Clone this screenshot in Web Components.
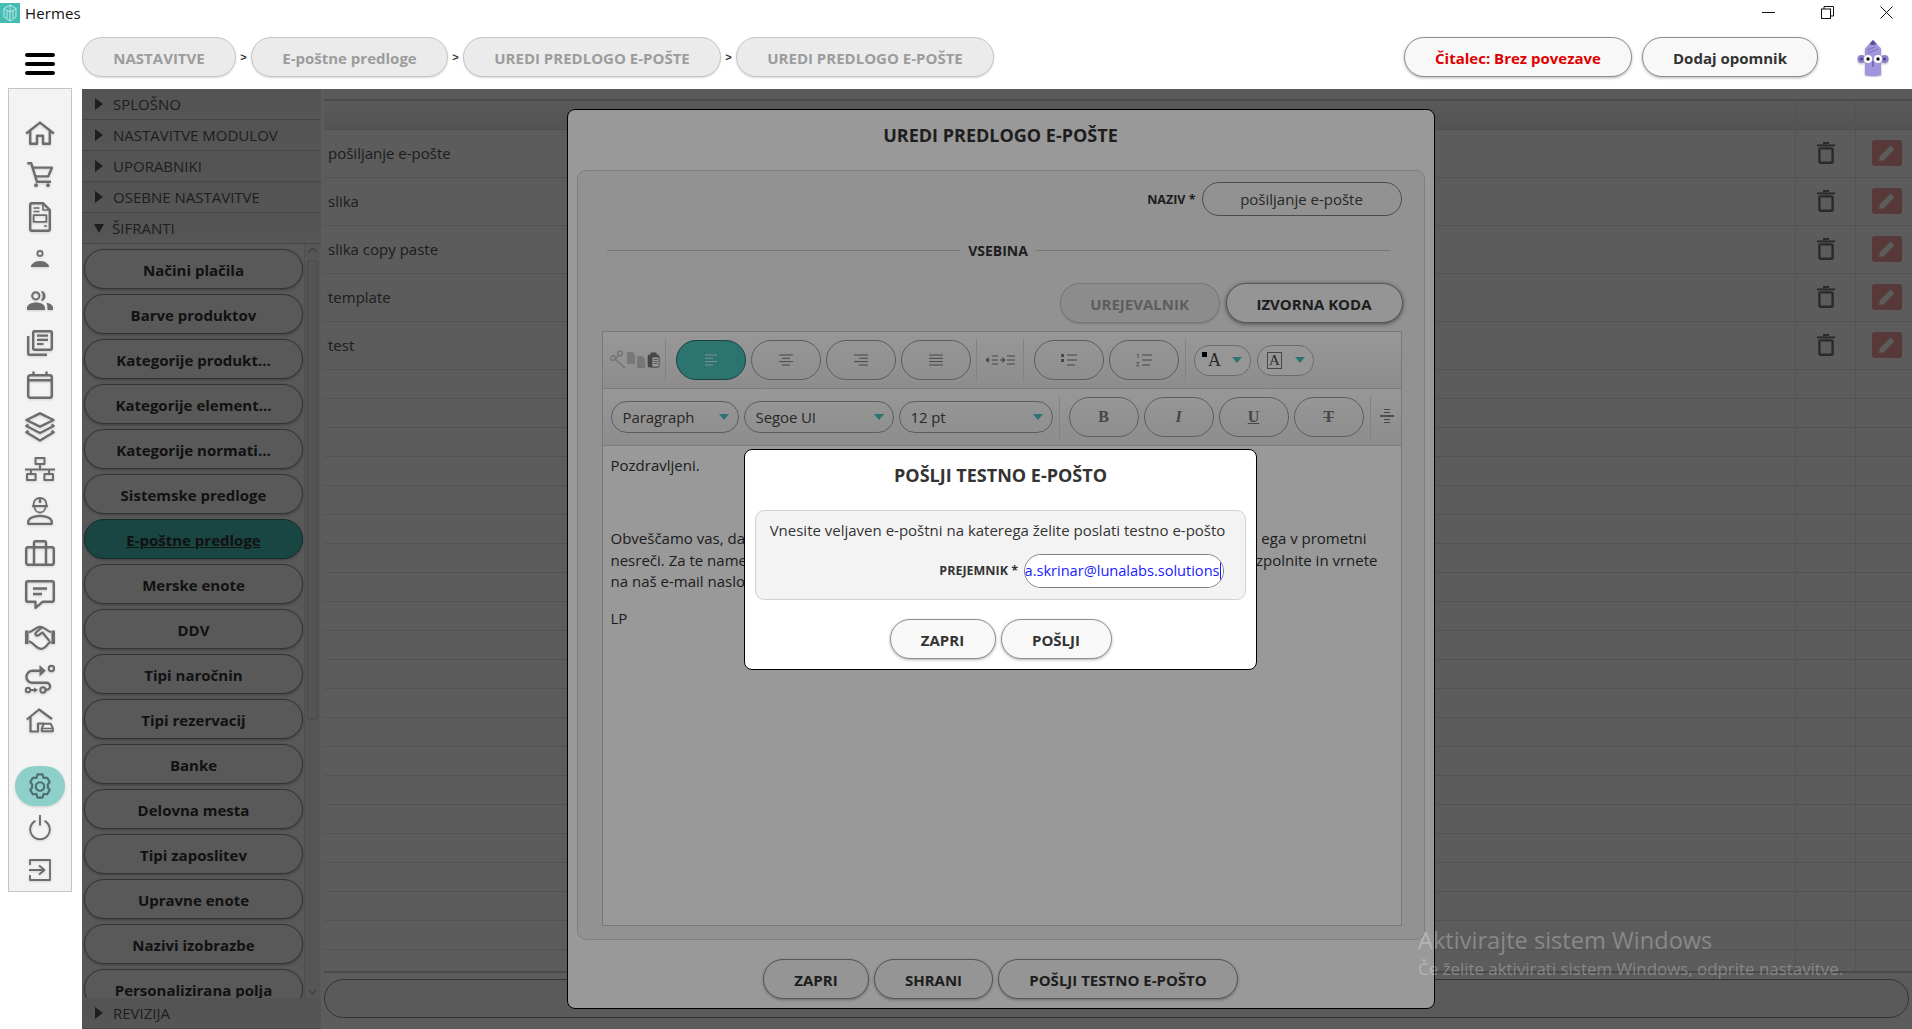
<!DOCTYPE html>
<html lang="sl">
<head>
<meta charset="utf-8">
<title>Hermes</title>
<style>
html,body{margin:0;padding:0;height:100%;overflow:hidden;background:#fff;font-family:"Open Sans","Liberation Sans",sans-serif;color:#333}
</style>
</head>
<body>
<hermes-app></hermes-app>
<script>
const ICONS = {
home:[30,24,'<path d="M1.2 12.5 15 1.6l13.8 10.9" fill="none"/><path d="M5.2 9.8V22.8H12V14.8h6V22.8h6.8V9.8" fill="none"/>'],
cart:[26,25,'<path d="M.3 1.2H4.2L10 19.8H24" fill="none"/><path d="M5.4 5.6H25l-3.8 8.8H8.2" fill="none"/><circle cx="9" cy="23.2" r="1.9" fill="currentColor" stroke="none"/><circle cx="21" cy="23.2" r="1.9" fill="currentColor" stroke="none"/>'],
doc:[22,30,'<path d="M1.2 2.4a1.2 1.2 0 0 1 1.2-1.2H14L20.8 8V27.6a1.2 1.2 0 0 1-1.2 1.2H2.4a1.2 1.2 0 0 1-1.2-1.2Z" fill="none"/><path d="M14 1.2V8H20.8M4.5 6h6M4.5 9.5h6M15 24h3" fill="none" stroke-width="1.6"/><rect x="4.6" y="13.2" width="12.8" height="6.6" fill="none" stroke-width="1.8"/>'],
person:[18,17,'<circle cx="9" cy="3.4" r="2.6" fill="none" stroke-width="1.7"/><path d="M0 17c0-1 .1-1.8.8-2.6C2.6 12 5.8 10.9 9 10.9s6.4 1.1 8.2 3.5c.7.8.8 1.6.8 2.6Z" fill="currentColor" stroke="none"/>'],
group:[26,19,'<circle cx="8.8" cy="4.8" r="3.6" fill="none" stroke-width="2"/><path d="M14.8 .6a4.6 4.6 0 0 1 0 8.6c2-1 2-7.6 0-8.6Z" fill="currentColor" stroke-width="1.4"/><path d="M0 19v-2c0-3.4 4.2-5.5 9-5.500s9 2.100 9 5.500v2Z" fill="currentColor" stroke="none"/><path d="M19.500 11.800c3.800.6 6.500 2.400 6.500 5v2.200h-5.500v-2.500c0-1.800-.3-3.300-1-4.700Z" fill="currentColor" stroke="none"/>'],
docs:[26,26,'<rect x="6.2" y="1.2" width="18.6" height="18.6" rx="1.5" fill="none"/><path d="M1.2 6V23.3a1.5 1.5 0 0 0 1.5 1.5H20" fill="none"/><path d="M10 5.6h11M10 9.8h11M10 14h6.500" fill="none" stroke-width="2.2"/>'],
calendar:[26,28,'<rect x="1.2" y="4.2" width="23.6" height="22.6" rx="2" fill="none"/><path d="M1.2 9.3H24.8M6.5 .5V4.5M19.5 .5V4.5" fill="none"/>'],
layers:[30,30,'<path d="M15 1.4 28.600 8 15 14.600 1.400 8Z" fill="none"/><path d="M3.400 12.600 1.400 14 15 21 28.600 14l-2-1.400" fill="none"/><path d="M3.400 18.800 1.400 20.200 15 28.600 28.600 20.200l-2-1.400" fill="none"/>'],
network:[30,24,'<rect x="10.5" y="1" width="9" height="6" fill="none" stroke-width="2"/><path d="M15 7v5M0 12.500H30M6 12.500V17M24 12.500V17" fill="none" stroke-width="2"/><rect x="2" y="17" width="8.6" height="6" fill="none" stroke-width="2"/><rect x="19.4" y="17" width="8.6" height="6" fill="none" stroke-width="2"/>'],
worker:[26,28,'<path d="M6.600 9V7.200a6.400 6.400 0 0 1 12.800 0V9Z" fill="none" stroke-width="1.800"/><path d="M13 1v5" stroke-width="2.400"/><path d="M5 9.200H21" stroke-width="1.800"/><path d="M7.400 10c.4 3.200 2.800 5.500 5.600 5.500s5.200-2.300 5.600-5.500" fill="none" stroke-width="1.800"/><path d="M1.200 26.800V25c0-3.600 5.400-6.200 11.800-6.200S24.800 21.400 24.800 25v1.800Z" fill="none" stroke-width="2.200"/>'],
briefcase:[30,26,'<rect x="1.2" y="7.2" width="27.6" height="17.6" rx="2" fill="none"/><path d="M9 24.800V2.700a1.500 1.500 0 0 1 1.500-1.500h9A1.500 1.500 0 0 1 21 2.700V24.800" fill="none"/>'],
chat:[30,29,'<path d="M2.700 1.200H27.300a1.500 1.500 0 0 1 1.500 1.500V20.300a1.500 1.500 0 0 1-1.500 1.500H17.500L10.500 27.800V21.800H2.700a1.500 1.500 0 0 1-1.500-1.500V2.700a1.500 1.500 0 0 1 1.500-1.500Z" fill="none"/><path d="M8 8.500H22M8 14H17" fill="none"/>'],
hands:[30,27,'<rect x="0" y="7.500" width="3.600" height="13.500" fill="currentColor" stroke="none"/><rect x="26.400" y="7.500" width="3.600" height="13.500" fill="currentColor" stroke="none"/><path d="M4 9.200C7 8.500 9.500 6 12 4.700c2-1 4.200-1 6.300 0 2 1 4.600 3.200 7.700 4.500" fill="none" stroke-width="2.200"/><path d="M4 18.300c2 .4 3.500 1.800 5.400 3.800 2.200 2.200 4.200 3.500 6.600 3.700 2.400.2 6-3.400 7.500-5.400L26 18.800" fill="none" stroke-width="2.200"/><path d="M16.500 4.700 11 9.500c-1.500 1.500 0 3.500 2 3 2-.6 3.300-2.600 4.500-3l7 8.500" fill="none" stroke-width="2.200"/>'],
route:[30,30,'<path d="M20 7.200H8a6 6 0 0 0 0 12h14.200a3.500 3.500 0 0 1 0 7H20" fill="none" transform="translate(-.6 -.4)"/><path d="M14.500 1 20.800 6.800 14.500 12.600Z" fill="currentColor" stroke="none"/><circle cx="26.400" cy="4.500" r="2.700" fill="none" stroke-width="2"/><circle cx="18" cy="26" r="2.700" fill="none" stroke-width="2"/><circle cx="3" cy="26" r="2.200" fill="none" stroke-width="2"/><path d="M6 26h3" fill="none" stroke-width="2"/><path d="M9 23.200 13 26 9 28.800Z" fill="currentColor" stroke="none"/>'],
housecar:[28,25,'<path d="M.8 11.500 13 1.500 26 11" fill="none" stroke-width="2.200"/><path d="M4.500 9V23.500H12V15.500h6" fill="none" stroke-width="2.200"/><path d="M15.800 23.300V20.300l2-4.500h7l2 4.500v3Z" fill="#f3f3f3" stroke-width="2"/><path d="M16 20.500H27" stroke-width="1.600"/>'],
gear:[24,27,'<path d="M9.400 1.400h5.200l.9 3.500 3-.1.700 0 2.600 4.300-2.100 2.600.3 1.300-.3 1.300 2.100 2.600-2.600 4.300-3.700-.1-.9 3.500H9.400l-.9-3.500-3.700.1-2.600-4.300 2.100-2.600-.3-1.300.3-1.300-2.100-2.600 2.600-4.300 3.700.1Z" fill="none" stroke-width="2.100"/><circle cx="12" cy="13.500" r="4.200" fill="none" stroke-width="2.100"/>'],
power:[22,22,'<path d="M6.500 5.800a9.800 9.800 0 1 0 9 0" fill="none" stroke-width="1.900"/><path d="M11 0V10.500" fill="none" stroke-width="1.900"/>'],
exit:[22,22,'<path d="M1 6V1H21V21H1V16" fill="none" stroke-width="1.800"/><path d="M0 11H14M10 6.500 15.500 11 10 15.500" fill="none" stroke-width="1.800"/>'],
trash:[18,22,'<path d="M0 3.400H18" stroke-width="2"/><path d="M6 1H12" stroke-width="2"/><rect x="2.400" y="6.400" width="13.200" height="14.400" rx="1" fill="none" stroke-width="2.400"/>'],
pencil:[16,16,'<path d="M0 16 1 11 10.500 1.500a1.500 1.500 0 0 1 2 0l2 2a1.500 1.500 0 0 1 0 2L5 15Z" fill="currentColor" stroke="none"/>'],
left:[14,14,'<path d="M1 2H13M1 5.300H9M1 8.600H13M1 12H9" fill="none" stroke-width="1"/>'],
center:[14,14,'<path d="M0 2H14M3 5.300H11M0 8.600H14M3 12H11" fill="none" stroke-width="1"/>'],
right:[14,14,'<path d="M0 2H14M5 5.300H14M0 8.600H14M5 12H14" fill="none" stroke-width="1"/>'],
justify:[14,14,'<path d="M0 2H14M0 5.300H14M0 8.600H14M0 12H14" fill="none" stroke-width="1"/>'],
bullets:[16,14,'<path d="M6 2H16M6 7H16M6 12H14" fill="none" stroke-width="1"/><rect x="0" y="1" width="3" height="3" fill="currentColor" stroke="none"/><rect x="0" y="6" width="3" height="3" fill="currentColor" stroke="none"/>'],
numbers:[16,14,'<path d="M6 2H16M6 7H16M6 12H14" fill="none" stroke-width="1"/><path d="M1 1.300 2 .8V5M.4 9.500H3L.5 13H3.200" fill="none" stroke-width=".8"/>'],
hrline:[14,14,'<path d="M4 .5H10M4 3.500H10M0 7H14M4 10.500H10M4 13.500H10" fill="none" stroke-width="1"/><path d="M0 7H14" stroke-width="1.600"/>'],
cut:[15,18,'<circle cx="3" cy="7" r="2.300" fill="none" stroke-width="1.200"/><circle cx="10" cy="2.500" r="2.300" fill="none" stroke-width="1.200"/><path d="M5 8 15 17M8.500 4 6 7.500" fill="none" stroke-width="1.300"/>'],
page:[8,12,'<path d="M0 0H5.500L8 3V12H0Z" fill="currentColor" stroke="none"/>'],
paste:[13,16,'<rect x=".7" y="2.500" width="11.600" height="13" rx="2" fill="currentColor" stroke="none"/><rect x="3.500" y=".5" width="6" height="3.500" rx="1" fill="currentColor" stroke="none"/><rect x="5" y="5" width="7" height="10" fill="#fff" stroke-width=".8"/><path d="M6.500 7.500h4M6.500 9.500h4M6.500 11.500h4" stroke-width=".8"/>'],
indent:[30,12,'<path d="M1 6H5M3.500 3.500 1 6l2.500 2.500" fill="currentColor" stroke-width="1"/><path d="M7 2H13M7 6H13M7 10H13" fill="none" stroke-width="1"/><path d="M15 6H19.500M17.500 3.500 20 6l-2.500 2.500" fill="currentColor" stroke-width="1"/><path d="M22 2H30M22 6H30M22 10H30" fill="none" stroke-width="1"/>']
};
function svg(name, sw){
  const [w,h,body]=ICONS[name];
  return `<svg xmlns="http://www.w3.org/2000/svg" width="${w}" height="${h}" viewBox="0 0 ${w} ${h}" stroke="currentColor" stroke-width="${sw||2.4}" stroke-linejoin="round" style="display:block;overflow:visible">${body}</svg>`;
}
function define(tag, css, html){
  class C extends HTMLElement{
    constructor(){super();this.attachShadow({mode:'open'});}
    connectedCallback(){
      if(!this._done){this._done=true;this.shadowRoot.innerHTML=`<style>${css}</style>`+(typeof html==='function'?html(this):html);}
    }
  }
  customElements.define(tag,C);
}
define('h-icon',':host{display:inline-flex;align-items:center;justify-content:center;color:inherit}',el=>svg(el.getAttribute('name'),el.getAttribute('sw')));
define('h-titlebar',`
:host{display:flex;align-items:center;height:37px;background:#fff;font-size:15px;color:#111}
.logo{width:20px;height:20px;background:#45bdb4;margin-top:-11px;flex:none}
.name{margin:-11px 0 0 5px;flex:1;letter-spacing:.1px}
.ctl{display:flex;gap:7px;margin-top:-12px}
.ctl span{width:52px;height:14px;display:flex;align-items:center;justify-content:center}
`,`<div class="logo"><svg width="20" height="20" viewBox="0 0 20 20" fill="none" stroke="#bfe9e5" stroke-width="1"><path d="M10 2 4 5.500V14l6 4 6-4V5.500Z"/><path d="M10 2V18M4 5.500 10 9l6-3.500M7 8v7M13 8v7"/></svg></div>
<div class="name">Hermes</div>
<div class="ctl">
<span><svg width="13" height="13"><path d="M0 6.500H13" stroke="#111" stroke-width="1"/></svg></span>
<span><svg width="13" height="13" fill="none" stroke="#111"><rect x=".5" y="3" width="9" height="9.500"/><path d="M3 3V.5H12.500V10H9.500"/></svg></span>
<span><svg width="13" height="13" stroke="#111"><path d="M.5.500 12.500 12.500M12.500.500 .5 12.500"/></svg></span>
</div>`);
define('h-pill',`
:host{display:inline-flex;align-items:center;justify-content:center;box-sizing:border-box;height:40px;padding-top:3px;border-radius:20px;background:#f8f8f8;border:1.5px solid #8f8f8f;box-shadow:0 1px 3px rgba(0,0,0,.3);font:700 15px/1 "Open Sans",sans-serif;color:#333;white-space:nowrap;flex:none}
:host([dis]){background:#ebebeb;border-color:#c6c6c6;color:#9c9c9c;box-shadow:0 1px 2px rgba(0,0,0,.15)}
:host([red]){color:#e00000}
:host([sel]){background:#48c1bb;text-decoration:underline;border-color:#2f7f7b}
`,`<slot></slot>`);
define('h-sep',`:host{display:block;width:15px;text-align:center;font:700 11px "Liberation Sans",sans-serif;color:#333}`,`&gt;`);
define('h-header',`
:host{display:block;height:52px;background:#fff}
.box{display:flex;align-items:flex-start;width:100%;height:52px}
.bur{margin-left:25px;width:30px;padding-top:16px;display:flex;flex-direction:column;gap:5px;flex:none}
.bur i{display:block;height:4px;border-radius:2px;background:#000}
.right{display:flex;gap:10px;margin-right:39px}
.ava{margin:2px 23px 0 0;flex:none}
`,`<div class="box"><div class="bur"><i></i><i></i><i></i></div><slot name="crumbs"></slot><div class="right"><slot name="actions"></slot></div>
<svg class="ava" width="32" height="38" viewBox="0 0 32 38"><g style="filter:drop-shadow(0 1px 1px rgba(0,0,0,.3))"><circle cx="4.5" cy="20" r="4" fill="#8f80cc"/><circle cx="27.5" cy="20" r="4" fill="#8f80cc"/><circle cx="4.5" cy="20" r="1.5" fill="#4d4680"/><circle cx="27.5" cy="20" r="1.5" fill="#4d4680"/><path d="M8 36V9.500L16 1l8 8.500V36Q16 38 8 36Z" fill="#a295de"/><path d="M12.500 5 16 1l3.500 4Q16 7 12.500 5Z" fill="#5a4d9e"/><path d="M10 11l8-3M11 14l10-4" stroke="#7d6fc2" stroke-width="1"/><circle cx="11" cy="20" r="4" fill="#fff"/><circle cx="21" cy="20" r="4" fill="#fff"/><circle cx="11" cy="20" r="1.7" fill="#111"/><circle cx="21" cy="20" r="1.7" fill="#111"/><path d="M16 22v6" stroke="#4d4680" stroke-width="1"/></g></svg></div>`);
define('h-rail-item',`
:host{display:flex;align-items:center;justify-content:center;height:42px;color:#6c6c6c;flex:none;filter:drop-shadow(0 1px 1px rgba(0,0,0,.14))}
:host([active]) .w{background:#8fcfca;color:#4c6f6e;width:50px;height:40px;border-radius:20px;display:flex;align-items:center;justify-content:center}
`,`<div class="w"><slot></slot></div>`);
define('h-rail',`
:host{display:flex;flex-direction:column;box-sizing:border-box;width:64px;height:804px;margin:-1px 0 0 8px;padding-top:25px;background:#f3f3f3;border:1px solid #c4c4c4;flex:none}
::slotted(.gap){height:21px;flex:none}
`,`<slot></slot>`);
define('h-acc-head',`
:host{display:flex;align-items:center;box-sizing:border-box;height:31px;padding-left:13px;background:linear-gradient(#e8e8e8,#efefef);border-bottom:1px solid #c4c4c4;font:400 15px "Open Sans",sans-serif;color:#555;flex:none}
.a{width:0;height:0;margin-right:10px;border-left:8px solid #555;border-top:6px solid transparent;border-bottom:6px solid transparent}
:host([open]) .a{border-left:5.500px solid transparent;border-right:5.500px solid transparent;border-top:9px solid #555;border-bottom:0;margin:0 8px 0 -1px}
`,`<span class="a"></span><slot></slot>`);
define('h-scroll',`
:host{display:block;position:absolute;right:1px;top:0;bottom:0;width:16px;background:#f1f1f1;border-left:1px solid #dcdcdc;box-sizing:border-box}
.t{position:absolute;left:2px;right:2px;top:16px;height:460px;background:#e9e9e9;border:1px solid #d0d0d0;box-sizing:border-box;border-radius:2px}
svg{position:absolute;left:3px}
`,`<svg style="top:3px" width="9" height="6" fill="none" stroke="#bbb" stroke-width="1.5"><path d="M.5 5.500 4.500 1l4 4.500"/></svg><div class="t"></div><svg style="bottom:3px" width="9" height="6" fill="none" stroke="#bbb" stroke-width="1.5"><path d="M.5.500 4.500 5l4-4.500"/></svg>`);
define('h-nav-list',`
:host{display:flex;flex-direction:column;gap:5px;flex:1;min-height:0;overflow:hidden;padding:5px 0 0 2px;position:relative}
::slotted(h-pill){width:219px}
`,`<slot></slot><h-scroll></h-scroll>`);
define('h-accordion',`
:host{display:flex;flex-direction:column;width:239px;flex:none;background:#f8f8f8;height:940px}
`,`<slot></slot>`);
define('h-row',`
:host{display:grid;grid-template-columns:1fr 60px 57px;height:48px;box-sizing:border-box;border-bottom:1px solid #e6e6e6;font:400 15px "Open Sans",sans-serif;color:#555;flex:none}
:host([empty]){height:29px}
:host([head]){height:29px;background:linear-gradient(#fafafa,#e9e9e9);border-bottom:1px solid #d9d9d9}
.n{display:flex;align-items:center;padding:0 0 2px 4px;min-width:0}
.c{display:flex;align-items:center;justify-content:center;border-left:1px solid #e6e6e6;padding-bottom:2px}
.c.p{padding-left:5px}
.t{color:#777}
.e{width:30px;height:26px;background:#f59a9a;border-radius:3px;display:flex;align-items:center;justify-content:center;color:#fff;opacity:.95}
`,el=>{
  const name=el.getAttribute('name')||'';
  const act=el.hasAttribute('act');
  return `<div class="n">${name}</div><div class="c">${act?`<span class="t">${svg('trash',2)}</span>`:''}</div><div class="c p">${act?`<span class="e">${svg('pencil')}</span>`:''}</div>`;
});
define('h-table',`
:host{display:flex;flex-direction:column;flex:1;min-width:0;margin-left:3px;height:940px;background:#fff}
.top{height:10px;background:#fafafa;border-bottom:2px solid #cfcfcf;flex:none}
.rows{flex:1;min-height:0;overflow:hidden;display:flex;flex-direction:column;border-bottom:2px solid #cfcfcf}
.filter{height:39px;margin:6px 3px 11px 0;border:1.5px solid #8f8f8f;border-radius:20px;background:#fafafa;box-sizing:border-box;flex:none}
`,`<div class="top"></div><div class="rows"><slot></slot></div><div class="filter"></div>`);
define('h-field',`
:host{display:flex;align-items:center;justify-content:flex-end;gap:6px}
.l{font:700 12.5px "Open Sans",sans-serif;color:#333}
.i{box-sizing:border-box;height:34px;border:1.2px solid #7f7f7f;border-radius:17px;background:#f3f3f3;font:400 15px "Open Sans",sans-serif;color:#444;display:flex;align-items:center;justify-content:center;overflow:hidden;white-space:nowrap}
`,el=>`<span class="l">${el.getAttribute('label')}</span><div class="i" style="width:${el.getAttribute('w')}px"><slot></slot></div>`);
define('h-divider',`
:host{display:flex;align-items:center;gap:8px;font:700 14px "Open Sans",sans-serif;color:#333;margin:0 34px 0 29px}
i{flex:1;height:1px;background:#c4c4c4}
`,`<i></i><slot></slot><i></i>`);
define('h-tool',`
:host{display:flex;align-items:center;justify-content:center;box-sizing:border-box;width:70px;height:40px;border-radius:20px;border:1.2px solid #9b9b9b;color:#777;font:700 16px "Liberation Serif",serif;flex:none}
:host([sel]){background:#48c1bb;border-color:#2f6f6b;color:#d6eeec}
`,`<slot></slot>`);
define('h-tsep',`:host{display:block;width:1px;height:43px;background:#d9d9d9;flex:none}`,``);
define('h-select',`
:host{display:flex;align-items:center;box-sizing:border-box;height:32px;border-radius:16px;border:1.2px solid #9b9b9b;padding:0 9px 0 11px;font:400 15px "Open Sans",sans-serif;color:#444;flex:none}
.s{flex:1;letter-spacing:-.1px}
.c{width:0;height:0;border-left:5px solid transparent;border-right:5px solid transparent;border-top:6.5px solid #48c1bb;margin-left:5px}
:host([small]){height:31px;border-radius:15px;padding:0 8px 0 9px;font-family:"Liberation Serif",serif;border-color:#b5b5b5;background:#fbfbfb}
`,`<span class="s"><slot></slot></span><span class="c"></span>`);
define('h-toolbar',`
:host{display:flex;align-items:center;height:57px;box-sizing:border-box;background:linear-gradient(#fdfdfd,#ebebeb);border-bottom:1px solid #cfcfcf}
`,`<slot></slot>`);
define('h-editor',`
:host{display:flex;flex-direction:column;box-sizing:border-box;height:595px;margin:8px 22px 0 24px;border:1px solid #c9c9c9;background:#fff;flex:none}
`,`<slot></slot>`);
define('h-doc',`
:host{display:block;flex:1;padding:9px 0 0 8px;font:400 15px/21.5px "Open Sans",sans-serif;color:#333;white-space:nowrap}
`,`<slot></slot>`);
define('h-line',`
:host{display:flex;justify-content:space-between;height:21.5px;width:100%;box-sizing:border-box}
`,`<slot></slot>`);
define('h-modal',`
:host{display:flex;flex-direction:column;box-sizing:border-box;background:#fff;border:1px solid #000;border-radius:8px;flex:none;font-family:"Open Sans",sans-serif}
h2{margin:0;text-align:center;font:700 18px/51px "Open Sans",sans-serif;color:#333;flex:none}
.b{flex:none;box-sizing:border-box;background:#f3f3f3;border:1px solid #d2d2d2;border-radius:9px;display:flex;flex-direction:column}
.f{display:flex;justify-content:center;gap:var(--fgap,6px);flex:none}
`,el=>`<h2 style="height:${el.getAttribute('th')}px"><slot name="title"></slot></h2>
<div class="b" style="margin:0 ${el.getAttribute('mx')}px;height:${el.getAttribute('bh')}px"><slot></slot></div>
<div class="f" style="margin-top:${el.getAttribute('ft')}px"><slot name="footer"></slot></div>`);
define('h-overlay',`
:host{position:absolute;inset:0;background:rgba(0,0,0,.4);display:flex;align-items:center;justify-content:center;padding-left:7px;box-sizing:border-box}
`,`<slot></slot>`);
define('h-watermark',`
:host{position:absolute;left:1418px;top:925px;color:rgba(255,255,255,.28);font-family:"Open Sans",sans-serif;white-space:nowrap;pointer-events:none}
.a{font-size:23.6px;line-height:30px}
.b{font-size:16.9px;line-height:22px;margin-top:3px}
`,`<div class="a">Aktivirajte sistem Windows</div><div class="b">Če želite aktivirati sistem Windows, odprite nastavitve.</div>`);

const railItems=['home','cart','doc','person','group','docs','calendar','layers','network','worker','briefcase','chat','hands','route','housecar'];
const navItems=['Načini plačila','Barve produktov','Kategorije produkt...','Kategorije element...','Kategorije normati...','Sistemske predloge','E-poštne predloge','Merske enote','DDV','Tipi naročnin','Tipi rezervacij','Banke','Delovna mesta','Tipi zaposlitev','Upravne enote','Nazivi izobrazbe','Personalizirana polja'];
const rowsHTML=['pošiljanje e-pošte','slika','slika copy paste','template','test'].map(n=>`<h-row act name="${n}"></h-row>`).join('')+'<h-row empty></h-row>'.repeat(21);

define('hermes-app',`
:host{display:block;position:relative;width:1912px;height:1029px;overflow:hidden;background:#fff}
.crumbs{display:flex;align-items:flex-start;margin-left:27px;flex:1}
h-sep{margin-top:14px}
.body{display:flex;height:940px}
.dimmed{position:absolute;left:82px;top:89px;right:0;bottom:0}
.inner{display:flex;width:1830px;height:940px}
.m2p{padding:9px 17px 0 11px;font-size:15px;color:#333;text-align:center;white-space:nowrap}
.tb{display:flex}
.email{background:#fff;display:flex;width:100%;height:100%;align-items:center;justify-content:flex-end;color:#1a1aff;font-size:14.6px;line-height:30px;padding-bottom:2px;white-space:nowrap;overflow:hidden;box-sizing:border-box;letter-spacing:-.02px}
.email i{display:block;width:1.5px;height:24px;background:#1a1aff;margin:2px 2px 0 0;flex:none}
`,`
<h-titlebar></h-titlebar>
<h-header>
  <div class="crumbs" slot="crumbs">
    <h-pill dis style="width:154px">NASTAVITVE</h-pill><h-sep></h-sep>
    <h-pill dis style="width:197px">E-poštne predloge</h-pill><h-sep></h-sep>
    <h-pill dis style="width:258px">UREDI PREDLOGO E-POŠTE</h-pill><h-sep></h-sep>
    <h-pill dis style="width:258px">UREDI PREDLOGO E-POŠTE</h-pill>
  </div>
  <h-pill slot="actions" red style="width:228px">Čitalec: Brez povezave</h-pill>
  <h-pill slot="actions" style="width:176px">Dodaj opomnik</h-pill>
</h-header>
<div class="body">
  <h-rail>
    ${railItems.map(n=>`<h-rail-item><h-icon name="${n}"></h-icon></h-rail-item>`).join('')}
    <div class="gap"></div>
    <h-rail-item active><h-icon name="gear"></h-icon></h-rail-item>
    <h-rail-item><h-icon name="power"></h-icon></h-rail-item>
    <h-rail-item style="margin-top:2px"><h-icon name="exit"></h-icon></h-rail-item>
  </h-rail>
</div>
<div class="dimmed">
  <div class="inner">
    <h-accordion>
      <h-acc-head>SPLOŠNO</h-acc-head>
      <h-acc-head>NASTAVITVE MODULOV</h-acc-head>
      <h-acc-head>UPORABNIKI</h-acc-head>
      <h-acc-head>OSEBNE NASTAVITVE</h-acc-head>
      <h-acc-head open>ŠIFRANTI</h-acc-head>
      <h-nav-list>${navItems.map(n=>`<h-pill ${n==='E-poštne predloge'?'sel':''}>${n}</h-pill>`).join('')}</h-nav-list>
      <h-acc-head>REVIZIJA</h-acc-head>
    </h-accordion>
    <h-table>
      <h-row head></h-row>
      ${rowsHTML}
    </h-table>
  </div>
  <h-overlay>
    <h-modal th="60" mx="9" bh="770" ft="19" style="width:868px;height:900px;--fgap:5px">
      <span slot="title">UREDI PREDLOGO E-POŠTE</span>
      <h-field label="NAZIV *" w="200" style="margin:11px 22px 0 0">pošiljanje e-pošte</h-field>
      <h-divider style="margin-top:23px;height:22px">VSEBINA</h-divider>
      <div style="display:flex;justify-content:flex-end;gap:6px;margin:22px 21px 0 0">
        <h-pill dis style="width:160px;background:#eaeaea">UREJEVALNIK</h-pill>
        <h-pill style="width:177px;box-shadow:0 1px 4px rgba(0,0,0,.5)">IZVORNA KODA</h-pill>
      </div>
      <h-editor>
        <h-toolbar>
          <span style="display:flex;align-items:center;gap:2px;margin-left:7px;width:55px;color:#777"><h-icon name="cut" style="opacity:.45"></h-icon><h-icon name="page" style="opacity:.35;margin-top:-4px"></h-icon><h-icon name="page" style="opacity:.35;margin-top:3px"></h-icon><h-icon name="paste" sw="1"></h-icon></span>
          <h-tsep></h-tsep>
          <span class="tb" style="gap:5px;margin:0 5px 0 10px"><h-tool sel><h-icon name="left" sw="1"></h-icon></h-tool><h-tool><h-icon name="center" sw="1"></h-icon></h-tool><h-tool><h-icon name="right" sw="1"></h-icon></h-tool><h-tool><h-icon name="justify" sw="1"></h-icon></h-tool></span>
          <h-tsep></h-tsep>
          <span style="width:46px;display:flex;justify-content:center;color:#777"><h-icon name="indent" sw="1"></h-icon></span>
          <h-tsep></h-tsep>
          <span class="tb" style="gap:5px;margin:0 6px 0 10px;color:#777"><h-tool><h-icon name="bullets" sw="1"></h-icon></h-tool><h-tool><h-icon name="numbers" sw="1"></h-icon></h-tool></span>
          <h-tsep></h-tsep>
          <span class="tb" style="gap:6px;margin-left:8px">
            <h-select small style="width:57px"><span style="position:relative;font-size:18px"><i style="position:absolute;left:-2px;top:2px;width:5px;height:5px;background:#000"></i>&nbsp;A</span></h-select>
            <h-select small style="width:57px"><span style="display:inline-block;border:1px solid #777;padding:0 1.5px;line-height:15px;font-size:15px">A</span></h-select>
          </span>
        </h-toolbar>
        <h-toolbar>
          <span class="tb" style="gap:5px;margin-left:8px">
            <h-select style="width:128px">Paragraph</h-select>
            <h-select style="width:150px">Segoe UI</h-select>
            <h-select style="width:154px">12 pt</h-select>
          </span>
          <h-tsep style="margin-left:6px"></h-tsep>
          <span class="tb" style="gap:5px;margin:0 6px 0 9px">
            <h-tool>B</h-tool><h-tool style="font-style:italic">I</h-tool><h-tool style="text-decoration:underline">U</h-tool><h-tool style="text-decoration:line-through">T</h-tool>
          </span>
          <h-tsep></h-tsep>
          <span style="margin-left:9px;color:#777"><h-icon name="hrline" sw="1"></h-icon></span>
        </h-toolbar>
        <h-doc>
          <div>Pozdravljeni.</div>
          <div style="height:51.5px"></div>
          <h-line><span>Obveščamo vas, da</span><span style="margin-right:34px">ega v prometni</span></h-line>
          <h-line><span>nesreči. Za te name</span><span style="margin-right:23px">zpolnite in vrnete</span></h-line>
          <h-line><span>na naš e-mail naslo</span></h-line>
          <div style="height:15px"></div>
          <div>LP</div>
        </h-doc>
      </h-editor>
      <h-pill slot="footer" style="width:106px">ZAPRI</h-pill>
      <h-pill slot="footer" style="width:119px">SHRANI</h-pill>
      <h-pill slot="footer" style="width:240px">POŠLJI TESTNO E-POŠTO</h-pill>
    </h-modal>
  </h-overlay>
  <h-overlay>
    <h-modal th="60" mx="10" bh="90" ft="19" style="width:513px;height:221px;--fgap:5px">
      <span slot="title">POŠLJI TESTNO E-POŠTO</span>
      <div class="m2p">Vnesite veljaven e-poštni na katerega želite poslati testno e-pošto</div>
      <h-field label="PREJEMNIK *" w="200" style="margin:14px 21px 0 0">
        <span class="email"><span>a.skrinar@lunalabs.solutions</span><i></i></span>
      </h-field>
      <h-pill slot="footer" style="width:106px">ZAPRI</h-pill>
      <h-pill slot="footer" style="width:111px">POŠLJI</h-pill>
    </h-modal>
  </h-overlay>
</div>
<h-watermark></h-watermark>
`);
</script>
</body>
</html>
